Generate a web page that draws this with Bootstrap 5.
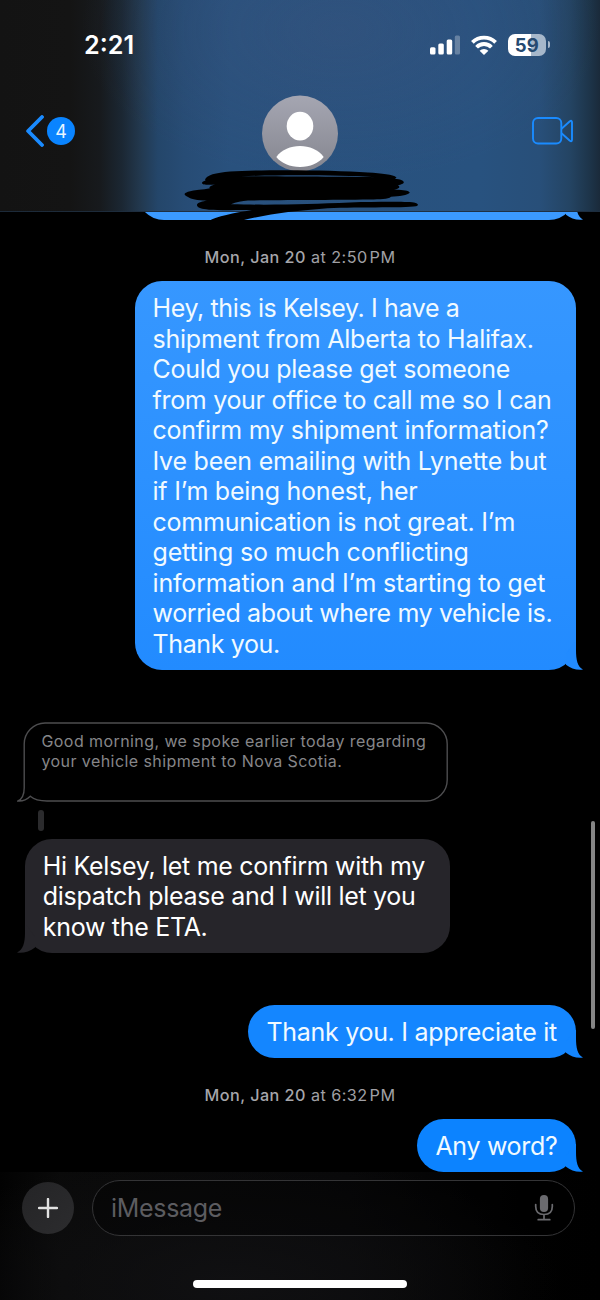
<!DOCTYPE html>
<html lang="en">
<head>
<meta charset="utf-8">
<meta name="viewport" content="width=device-width, initial-scale=1">
<title>Messages</title>
<link href="https://cdn.jsdelivr.net/npm/bootstrap@5.3.0/dist/css/bootstrap.min.css" rel="stylesheet">
<style>
  body { background:#000; font-family:Inter,"Liberation Sans",sans-serif; }
  .phone { width:600px; height:1300px; background:#000; color:#fff; }
  .topbar { height:212px; z-index:2; border-bottom:1px solid rgba(30,45,62,.9);
    background:radial-gradient(ellipse 260px 150px at 340px 30px,rgba(70,84,124,.25),rgba(70,84,124,0)),
    linear-gradient(90deg,#131313 0,#141414 70px,#171a1d 100px,#1b2733 122px,#22384e 140px,#24466a 158px,#274c75 185px,#29517d 230px,#28527f 480px,#284f79 540px,#244463 570px,#1d3449 590px,#1a2a3a 600px); }
  .status { height:91px; padding:0 50px 0 84px; }
  .status-icons { gap:11px; margin-top:-2px; }
  .clock { font-size:25.2px; font-weight:600; }
  .battery { width:38.5px; height:22px; border-radius:7px; color:#254a70; font-size:18.5px; font-weight:700; line-height:22px;
    background:linear-gradient(90deg,#fff 60%,#a6b7ca 60%); }
  .battery-tip { width:2.5px; height:7px; margin-left:1.5px; border-radius:0 3px 3px 0; background:#a6b7ca; }
  .navrow { height:82px; padding:0 26px; margin-top:-1px; }
  .count { width:28px; height:28px; margin-left:3px; background:#0a84ff; font-size:18px; color:#eaf6ff; }
  .scribble { left:180px; top:165px; }
  .thread { height:960px; }
  .stamp { font-size:16.2px; line-height:20px; letter-spacing:.46px; color:#a0a0a5; }
  .stamp b { font-weight:500; color:#a6a6ab; }
  .bubble { border-radius:27px; padding:12.1px 18px 9.9px; font-size:25px; line-height:30.5px; letter-spacing:-.3px; white-space:nowrap; }
  .bubble span { display:block; }
  .looser { letter-spacing:-.17px; }
  .loose { letter-spacing:-.23px; }
  .tight { letter-spacing:-.37px; }
  .sent { margin-right:24.5px; color:#f1faff; }
  .earlier { width:439px; height:60px; margin-top:-52px; --fill:#3b9aff; background:var(--fill); }
  .long { width:441px; height:388.5px; margin-top:14.3px; padding-top:12px; --fill:#228bff; background:linear-gradient(#3697ff,#228bff); }
  .reply { width:328px; height:53px; padding-left:19px; margin-top:52px; --fill:#1486ff; background:var(--fill); }
  .latest { margin-top:14px; --fill:#0c83ff; background:var(--fill); }
  .tail { right:-7px; bottom:0; fill:var(--fill); }
  .tail-l { left:-8px; bottom:0; fill:var(--fill); }
  .received { margin-left:24.5px; width:425.5px; height:114px; padding:12.1px 18px 0 18.3px; --fill:#26252a; background:var(--fill); }
  .quote { margin:52px 0 0 17px; width:431px; height:80px; padding:10.6px 0 0 24.5px; font-size:16px; line-height:19.8px; letter-spacing:.42px; color:#868689; white-space:nowrap; }
  .connector { width:6px; height:21px; border-radius:3px; background:#2b2b2d; margin:8px 0 8px 38px; }
  .thumb { width:4px; height:208px; right:5px; top:821px; background:#858585; }
  .composer { height:128px; padding:7.5px 25px 0 21.5px; gap:18px;
    background:radial-gradient(ellipse 330px 130px at 230px 110px,#101012 0,rgba(14,14,16,0) 100%),linear-gradient(90deg,#020202,#0a0a0a 60px,#080809 350px,#010101 520px,#000); }
  .plus { width:52px; height:52px; margin-top:2.5px; background:linear-gradient(135deg,#242426,#2c2c2e); }
  .field { height:56.5px; border:1.5px solid #343436; padding:1px 20.5px 0 18.5px; font-size:25px; letter-spacing:-.3px; color:#5c5c60; background:rgba(0,0,0,.35); }
  .home { width:214px; height:8px; left:193px; bottom:12px; }
</style>
</head>
<body>
<svg class="d-none">
  <symbol id="tail-right" viewBox="0 0 30 28"><path d="M13 12L21.500 0H23V8C23 18 24.500 24.500 30 27.600C24 28.500 17.500 26.500 13 22.800Z"/></symbol>
</svg>
<div class="phone position-relative overflow-hidden d-flex flex-column">

  <header class="topbar position-relative flex-shrink-0">
    <div class="status d-flex align-items-center justify-content-between">
      <span class="clock">2:21</span>
      <div class="status-icons d-flex align-items-center">
        <svg width="30" height="20" viewBox="0 0 30 20" fill="#fff"><rect y="12.3" width="5.5" height="7.2" rx="1.5"/><rect x="8.3" y="8.4" width="5.5" height="11.1" rx="1.5"/><rect x="16.7" y="4.4" width="5.5" height="15.1" rx="1.5"/><rect x="24.8" y=".4" width="5.2" height="19.1" rx="1.5" opacity=".28"/></svg>
        <svg width="26" height="20" viewBox="0 0 26 20" fill="none" stroke="#fff" stroke-width="3.8"><path d="M1.4 7.4A16.6 16.6 0 0 1 24.6 7.4"/><path d="M5.6 12.2A10.2 10.2 0 0 1 20.4 12.2"/><path d="M13 20L8.600 15.800A6.200 6.200 0 0 1 17.400 15.800Z" fill="#fff" stroke="none"/></svg>
        <div class="d-flex align-items-center"><span class="battery text-center">59</span><span class="battery-tip"></span></div>
      </div>
    </div>
    <div class="navrow d-flex align-items-center">
      <div class="d-flex align-items-center flex-fill w-25">
        <svg width="18" height="32" viewBox="0 0 18 32" fill="none" stroke="#1a8bff" stroke-width="3.8" stroke-linecap="round" stroke-linejoin="round"><path d="M16 2L2.1 16L16 30"/></svg>
        <span class="count rounded-circle d-flex align-items-center justify-content-center">4</span>
      </div>
      <svg class="mt-1 flex-shrink-0" width="76" height="77" viewBox="0 -.5 76 77">
        <defs><linearGradient id="av" x2="0" y2="1"><stop stop-color="#a5a6b2"/><stop offset="1" stop-color="#85868f"/></linearGradient></defs>
        <circle cx="38" cy="38" r="38" fill="url(#av)"/>
        <ellipse cx="38" cy="30.6" rx="13.3" ry="14.4" fill="#fff"/>
        <path d="M14.3 61.5C20 54 28.500 50.500 38 50.500S56 54 61.700 61.500C57 67.500 48 71.500 38 71.500S19 67.500 14.300 61.500Z" fill="#fff"/>
      </svg>
      <div class="d-flex justify-content-end flex-fill w-25">
        <svg width="42" height="28" viewBox="0 0 42 28" fill="none" stroke="#1a8bff" stroke-width="1.9" stroke-linejoin="round"><rect x="1" y="1" width="28.300" height="25.500" rx="5"/><path d="M29.500 11.700L37.600 4.500Q40 2.700 40 5.500V22.500Q40 25.300 37.600 23.500L29.500 16.300"/></svg>
      </div>
    </div>
    <svg class="scribble position-absolute" width="242" height="58" viewBox="180 165 242 58" fill="#000">
      <path fill-rule="evenodd" d="M205 180C206 175 216 173 230 171.600C262 169.500 330 169.800 368 172.600C382 173.600 393 174.500 396.500 177.500L395 179C400 179 404 180.500 403.800 182.500C403 184.500 399 184.500 398 185.500C401 187 399 189 394 189.800C401 189.500 409 190.500 409.800 192.500C408 195.500 399 196 391 196.800C388 199.500 380 199.300 370 199.500C330 200 280 200 248 200.500C242 200.800 236 202 231 204.300C280 205.300 310 204 350 202.500C380 201.600 405 201.700 414 202.400C418 203 419.500 205.500 416 206.300C405 208.300 350 206.500 322 208.700C296 210.500 268 214 242 220.500L240 221H209C216 216.500 234 213 252 210C230 210 213 210.800 206 209.300C200 208.500 196.500 207 197 204.500C198 202 203 201.500 207 200.500C197 200.500 191 199 188 197C184 195 183 193.500 188 191.700C195 189.500 203 190 210 188.300C208 187 212 185.500 215 184.600C208 185 202 185 202 183C202 181 207 180.500 205 180ZM241 176.300C280 174.800 340 175 376 177.300C340 176.700 280 176.500 241 176.300Z"/>
    </svg>
  </header>

  <main class="thread overflow-hidden d-flex flex-column flex-shrink-0">
    <div class="bubble sent earlier align-self-end position-relative flex-shrink-0">
      <svg class="tail position-absolute" width="30" height="28"><use href="#tail-right"/></svg>
    </div>

    <div class="stamp text-center" style="margin-top:27px"><b>Mon, Jan 20</b> at 2:50&#8202;PM</div>

    <div class="bubble sent long align-self-end position-relative">
      <span class="tight">Hey, this is Kelsey. I have a</span>
      <span class="loose">shipment from Alberta to Halifax.</span>
      <span>Could you please get someone</span>
      <span>from your office to call me so I can</span>
      <span class="loose">confirm my shipment information?</span>
      <span class="loose">Ive been emailing with Lynette but</span>
      <span class="loose">if I’m being honest, her</span>
      <span class="loose">communication is not great. I’m</span>
      <span class="looser">getting so much conflicting</span>
      <span class="looser">information and I’m starting to get</span>
      <span class="tight">worried about where my vehicle is.</span>
      <span class="tight">Thank you.</span>
      <svg class="tail position-absolute" width="30" height="28"><use href="#tail-right"/></svg>
    </div>

    <div class="quote position-relative">
      <svg class="position-absolute top-0 start-0" width="431" height="80" fill="none" stroke="#4d4d4f" stroke-width="1.400"><path d="M7.200 22A21 21 0 0 1 28 1H409.500A21 21 0 0 1 430.200 22V58A21 21 0 0 1 409.500 79H30C23 79 17 77.500 13.300 74.300C10 77.500 5 79.300 1 79C5 77 7.200 73 7.200 66Z"/></svg>
      Good morning, we spoke earlier today regarding<br>your vehicle shipment to Nova Scotia.
    </div>
    <div class="connector"></div>

    <div class="bubble received position-relative">
      <span>Hi Kelsey, let me confirm with my</span>
      <span>dispatch please and I will let you</span>
      <span>know the ETA.</span>
      <svg class="tail-l position-absolute" width="30" height="28"><path d="M18 12L9.500 0H8V8C8 18 6 24.500 0 27.600C6 28.500 13 26.500 18 22.500Z"/></svg>
    </div>

    <div class="bubble sent reply align-self-end position-relative">
      <span>Thank you. I appreciate it</span>
      <svg class="tail position-absolute" width="30" height="28"><use href="#tail-right"/></svg>
    </div>

    <div class="stamp text-center" style="margin-top:27.500px"><b>Mon, Jan 20</b> at 6:32&#8202;PM</div>

    <div class="bubble sent latest align-self-end position-relative">
      <span>Any word?</span>
      <svg class="tail position-absolute" width="30" height="28"><use href="#tail-right"/></svg>
    </div>
  </main>

  <footer class="composer d-flex align-items-start position-relative flex-shrink-0">
    <span class="plus rounded-circle d-flex align-items-center justify-content-center flex-shrink-0">
      <svg width="20" height="20" fill="none" stroke="#e2e2e2" stroke-width="2.400" stroke-linecap="round"><path d="M10 1V19M1 10H19"/></svg>
    </span>
    <div class="field rounded-pill flex-grow-1 d-flex align-items-center justify-content-between">
      <span>iMessage</span>
      <svg width="20" height="28" viewBox="0 0 20 28" fill="none" stroke="#6a6a6e" stroke-width="1.700" stroke-linecap="round"><rect x="5.900" y="1" width="8.200" height="17" rx="4.100" fill="#6a6a6e" stroke="none"/><path d="M1.700 10.500V12.500C1.700 18 5.300 20.500 10 20.500S18.300 18 18.300 12.500V10.500M10 20.500V25.500M4.200 25.700H15.800"/></svg>
    </div>
    <div class="home position-absolute rounded-pill bg-white"></div>
  </footer>

  <div class="thumb position-absolute rounded-pill"></div>
</div>
<script src="https://cdn.jsdelivr.net/npm/bootstrap@5.3.0/dist/js/bootstrap.bundle.min.js"></script>
</body>
</html>
